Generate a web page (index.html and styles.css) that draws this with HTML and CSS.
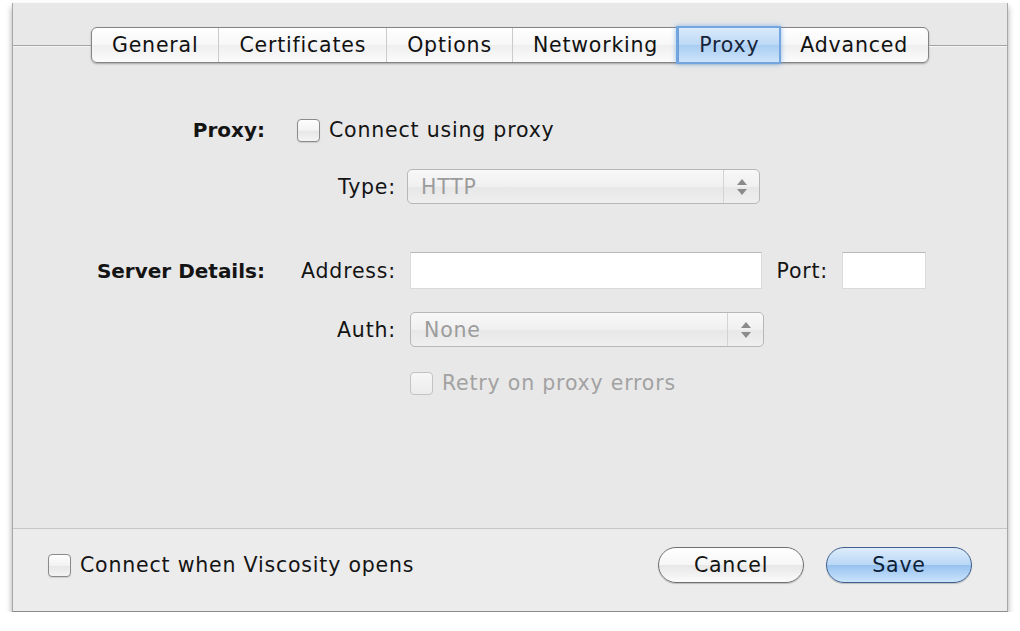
FILE: index.html
```html
<!DOCTYPE html>
<html>
<head>
<meta charset="utf-8">
<title>Viscosity - Proxy</title>
<link rel="stylesheet" href="styles.css">
</head>
<body>
<div class="window">
  <div class="tabstrip">
    <div class="rule"></div>
    <div class="tabs">
      <div class="tab">General</div>
      <div class="tab">Certificates</div>
      <div class="tab">Options</div>
      <div class="tab">Networking</div>
      <div class="tab selected">Proxy</div>
      <div class="tab">Advanced</div>
    </div>
    <div class="rule"></div>
  </div>

  <div class="content">
    <div class="row row-proxy">
      <div class="main-label">Proxy:</div>
      <div class="check span-rest"><span class="box"></span><span>Connect using proxy</span></div>
    </div>
    <div class="row row-type">
      <div class="sub-label col2">Type:</div>
      <div class="select col3">
        <span class="value">HTTP</span>
        <span class="arrows">
          <svg width="10" height="6" viewBox="0 0 10 6"><path d="M5 0 L10 6 L0 6 Z" fill="#8a8a8a"/></svg>
          <svg width="10" height="6" viewBox="0 0 10 6"><path d="M0 0 L10 0 L5 6 Z" fill="#8a8a8a"/></svg>
        </span>
      </div>
    </div>
    <div class="row row-server">
      <div class="main-label">Server Details:</div>
      <div class="sub-label col2">Address:</div>
      <div class="field col3"></div>
      <div class="port-label">Port:</div>
      <div class="field port"></div>
    </div>
    <div class="row row-auth">
      <div class="sub-label col2">Auth:</div>
      <div class="select col3">
        <span class="value">None</span>
        <span class="arrows">
          <svg width="10" height="6" viewBox="0 0 10 6"><path d="M5 0 L10 6 L0 6 Z" fill="#8a8a8a"/></svg>
          <svg width="10" height="6" viewBox="0 0 10 6"><path d="M0 0 L10 0 L5 6 Z" fill="#8a8a8a"/></svg>
        </span>
      </div>
    </div>
    <div class="row row-retry">
      <div class="check disabled col3"><span class="box"></span><span>Retry on proxy errors</span></div>
    </div>
  </div>

  <div class="footer">
    <div class="check"><span class="box"></span><span>Connect when Viscosity opens</span></div>
    <div class="buttons">
      <div class="btn">Cancel</div>
      <div class="btn primary">Save</div>
    </div>
  </div>
</div>
</body>
</html>
```

FILE: styles.css
```css
html, body {
  margin: 0;
  padding: 0;
  background: #ffffff;
}

body {
  font-family: "DejaVu Sans", "Liberation Sans", sans-serif;
  font-size: 20.5px;
  letter-spacing: 0.8px;
  color: #141414;
}

.window {
  margin: 3px 0 0 12px;
  width: 996px;
  height: 609px;
  box-sizing: border-box;
  background: #e8e8e8;
  border-left: 1px solid #a8a8a8;
  border-right: 1px solid #a8a8a8;
  border-bottom: 1px solid #8c8c8c;
  box-shadow: 0 4px 6px rgba(0, 0, 0, 0.35);
  display: flex;
  flex-direction: column;
}

/* Tab strip */
.tabstrip {
  display: flex;
  align-items: center;
  margin-top: 24px;
  height: 36px;
}

.rule {
  flex: 1;
  height: 1px;
  background: #a3a3a3;
  box-shadow: 0 1px 0 #f6f6f6;
}

.tabs {
  display: flex;
  height: 36px;
  box-sizing: border-box;
  border: 1px solid #858585;
  border-radius: 6px;
  background: linear-gradient(#ffffff, #f7f7f7 50%, #efefef 51%, #fbfbfb);
  box-shadow: 0 1px 2px rgba(0, 0, 0, 0.3);
}

.tab {
  display: flex;
  align-items: center;
  padding: 0 20px;
  border-left: 1px solid #cbcbcb;
  color: #111;
}

.tab:first-child {
  border-left: none;
}

.tab.selected {
  background: linear-gradient(#d9eafb, #bcd8f6 50%, #a9cdf2 51%, #cde4fb);
  border-left-color: #6c9fd8;
  box-shadow: 0 0 0 2px #73a6df, 0 0 5px 2px rgba(84, 148, 222, 0.6);
  position: relative;
  color: #16243a;
}

.tab.selected + .tab {
  border-left-color: transparent;
}

/* Form content */
.content {
  flex: 1;
  padding: 55px 0 0 67px;
}

.row {
  display: grid;
  grid-template-columns: 203px 99px 352px 52px 84px;
  column-gap: 14px;
  align-items: center;
}

.row-proxy { height: 24px; }
.row-type { height: 35px; margin-top: 27px; }
.row-server { height: 37px; margin-top: 48px; }
.row-auth { height: 35px; margin-top: 23px; }
.row-retry { height: 23px; margin-top: 24px; }

.main-label {
  grid-column: 1;
  font-size: 20px;
  letter-spacing: 0;
  font-weight: bold;
  text-align: right;
  padding-right: 18px;
}

.sub-label {
  text-align: right;
  white-space: nowrap;
}

.col2 { grid-column: 2; }
.col3 { grid-column: 3; }
.span-rest { grid-column: 2 / span 3; }

.port-label {
  grid-column: 4;
  text-align: right;
}

.check {
  display: flex;
  align-items: center;
  white-space: nowrap;
}

.box {
  width: 23px;
  height: 23px;
  box-sizing: border-box;
  border: 1px solid #8a8a8a;
  border-radius: 4px;
  background: linear-gradient(#fefefe, #f2f2f2 50%, #e6e6e6 51%, #f4f4f4);
  box-shadow: 0 1px 1px rgba(0, 0, 0, 0.12);
  margin-right: 9px;
  flex: none;
}

.check.disabled {
  color: #a2a2a2;
}

.check.disabled .box {
  border-color: #c3c3c3;
  background: linear-gradient(#f6f6f6, #ececec);
  box-shadow: none;
}

.select {
  display: flex;
  align-items: center;
  height: 35px;
  box-sizing: border-box;
  border: 1px solid #b7b7b7;
  border-radius: 5px;
  background: linear-gradient(#f8f8f8, #f0f0f0 50%, #e7e7e7 51%, #efefef);
  color: #9c9c9c;
}

.row-type .select {
  width: 353px;
  margin-left: -3px;
}

.row-auth .select {
  width: 354px;
}

.select .value {
  flex: 1;
  padding-left: 13px;
}

.arrows {
  width: 35px;
  align-self: stretch;
  border-left: 1px solid #d3d3d3;
  display: flex;
  flex-direction: column;
  align-items: center;
  justify-content: center;
  gap: 4px;
}

.arrows svg {
  display: block;
}

.field {
  height: 37px;
  box-sizing: border-box;
  background: #ffffff;
  border: 1px solid #dadada;
  border-top-color: #b9b9b9;
}

.field.port {
  grid-column: 5;
}

/* Footer */
.footer {
  height: 83px;
  box-sizing: border-box;
  border-top: 1px solid #c6c6c6;
  background: #ececec;
  display: flex;
  align-items: center;
  justify-content: space-between;
  padding: 0 35px 10px 35px;
}

.buttons {
  display: flex;
  gap: 22px;
}

.btn {
  width: 146px;
  height: 36px;
  box-sizing: border-box;
  border-radius: 18px;
  border: 1px solid #707070;
  background: linear-gradient(#ffffff, #f6f6f6 50%, #e7e7e7 51%, #fbfbfb);
  box-shadow: 0 1px 1px rgba(0, 0, 0, 0.2);
  display: flex;
  align-items: center;
  justify-content: center;
  color: #141414;
}

.btn.primary {
  border-color: #40608f;
  background: linear-gradient(#dfedfc, #b7d6f6 50%, #97c2ef 51%, #cbe4fc);
  color: #0d1e38;
}
```
